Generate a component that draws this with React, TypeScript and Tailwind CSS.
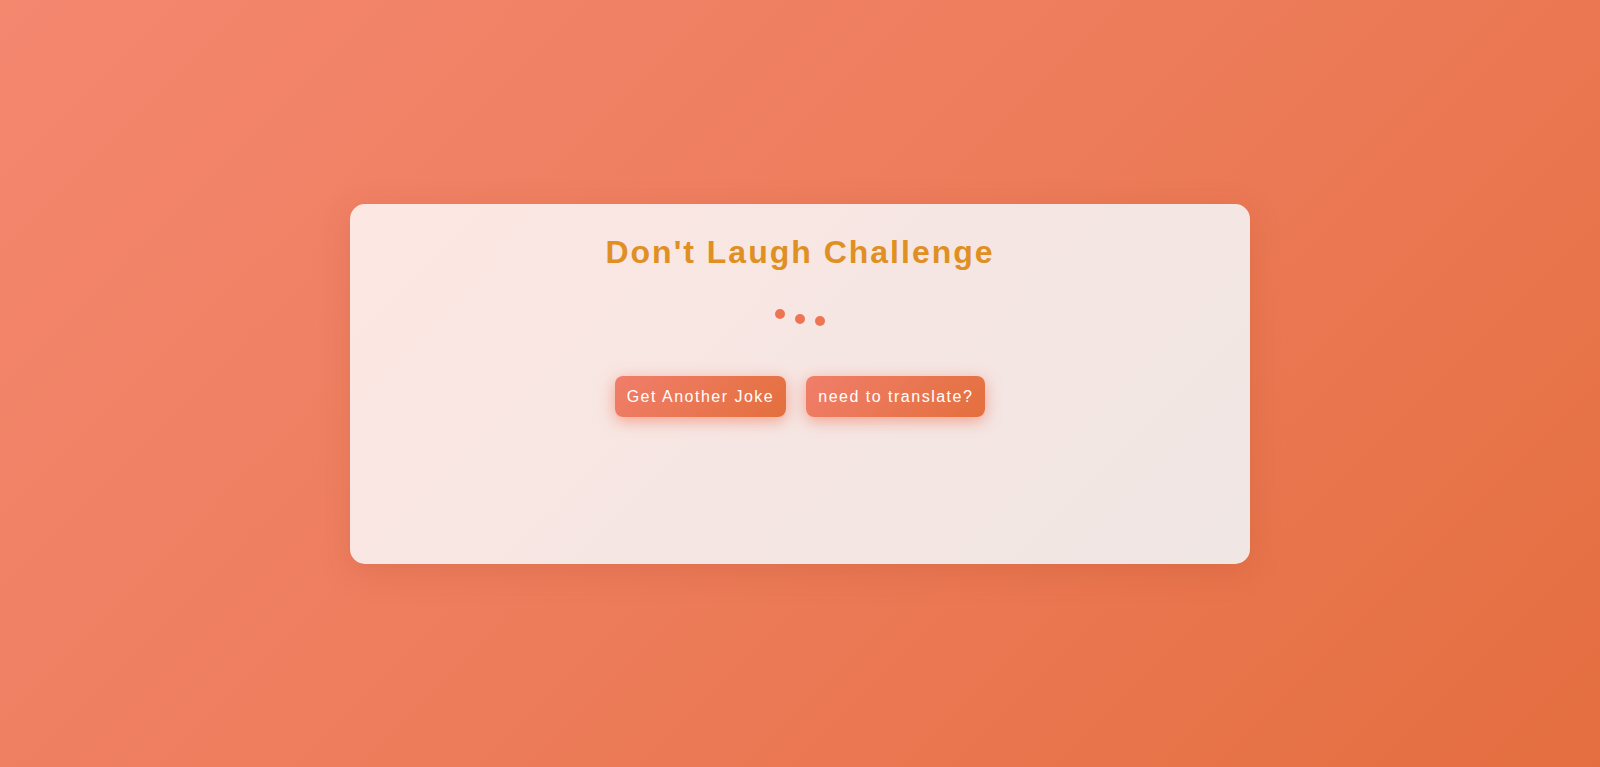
const DOTS = [
  { key: "a", shift: "-translate-y-[5px]" },
  { key: "b", shift: "translate-y-0" },
  { key: "c", shift: "translate-y-[2px]" },
]

export default function App() {
  return (
    <main
      className="flex h-[767px] w-full items-center justify-center bg-[linear-gradient(135deg,#f4876f_0%,#ed7c5b_50%,#e46e3f_100%)]"
      style={{ fontFamily: '"Liberation Sans", Arial, sans-serif' }}
    >
      {/* Card */}
      <section className="flex h-[360px] w-[900px] flex-col items-center rounded-[15px] bg-[linear-gradient(135deg,#fde7e2_0%,#f6e6e3_50%,#f0e6e4_100%)] pt-[30px] shadow-[0_8px_32px_rgba(160,60,30,0.18)]">
        <h1 className="text-[32px] leading-[37px] font-bold tracking-[2px] text-[#e08f22]">
          Don't Laugh Challenge
        </h1>

        {/* Loading dots */}
        <div className="mt-[43px] flex h-[10px] items-center gap-[10px]">
          {DOTS.map(({ key, shift }) => (
            <span key={key} className={`h-[10px] w-[10px] rounded-full bg-[#ee7553] ${shift}`} />
          ))}
        </div>

        <div className="mt-[52px] flex gap-5">
          <button className="rounded-lg bg-[linear-gradient(135deg,#f07e6a,#e46f3d)] px-3 py-3 text-base leading-[17px] tracking-[1.5px] text-white shadow-[0_4px_15px_rgba(238,105,75,0.55)]">
            Get Another Joke
          </button>
          <button className="rounded-lg bg-[linear-gradient(135deg,#f07e6a,#e46f3d)] px-3 py-3 text-base leading-[17px] tracking-[1.5px] text-white shadow-[0_4px_15px_rgba(238,105,75,0.55)]">
            need to translate?
          </button>
        </div>
      </section>
    </main>
  )
}
